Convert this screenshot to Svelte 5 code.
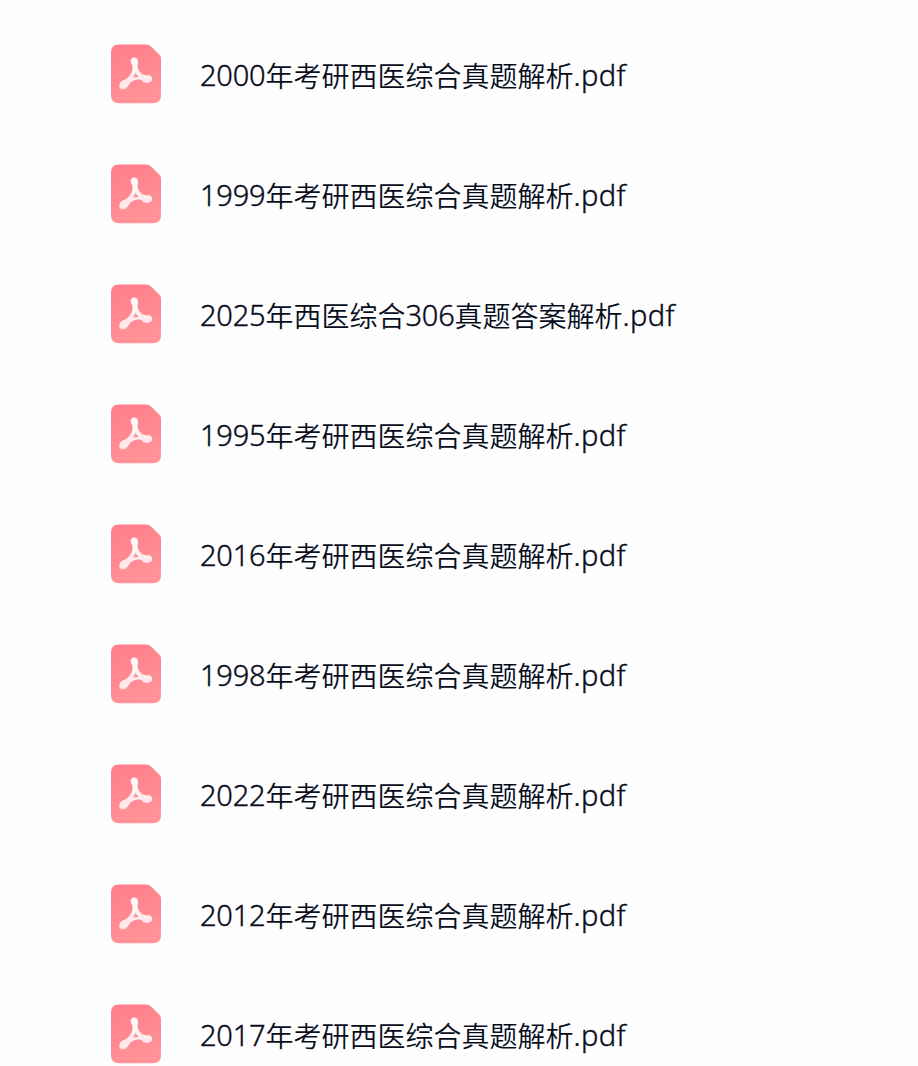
<script lang="ts">
  interface FileItem {
    year: string;
    title: string;
    code?: string;
    suffix?: string;
  }

  const files: FileItem[] = [
    { year: '2000', title: '年考研西医综合真题解析' },
    { year: '1999', title: '年考研西医综合真题解析' },
    { year: '2025', title: '年西医综合', code: '306', suffix: '真题答案解析' },
    { year: '1995', title: '年考研西医综合真题解析' },
    { year: '2016', title: '年考研西医综合真题解析' },
    { year: '1998', title: '年考研西医综合真题解析' },
    { year: '2022', title: '年考研西医综合真题解析' },
    { year: '2012', title: '年考研西医综合真题解析' },
    { year: '2017', title: '年考研西医综合真题解析' }
  ];
</script>

<ul class="file-list">
  {#each files as file}
    <li class="file-row">
      <svg class="file-icon" viewBox="0 0 52 60" aria-hidden="true">
        <defs>
          <linearGradient id="pdf-bg" x1="0" y1="0" x2="0.3" y2="1">
            <stop offset="0" stop-color="#ff7c88" />
            <stop offset="1" stop-color="#ff9398" />
          </linearGradient>
          <linearGradient id="pdf-mark" x1="0" y1="0" x2="0" y2="1">
            <stop offset="0" stop-color="#fffafa" />
            <stop offset="1" stop-color="#ffe3e4" />
          </linearGradient>
        </defs>
        <path
          d="M9 .5H36.5Q39 .5 41 2.4L49.2 10.5Q51 12.3 51 15V51.5Q51 59.3 43 59.3H9Q1 59.3 1 51.5V8.5Q1 .5 9 .5Z"
          fill="url(#pdf-bg)"
        />
        <path
          fill="url(#pdf-mark)"
          fill-rule="evenodd"
          d="M23.800 13.500C26.600 13.300 28.200 15.300 28.100 18.200C28 20.500 27.500 22 28 24C28.800 27 30.700 29.600 33.300 30.700C35.200 31.400 38 30.700 40.400 31.700C42.700 32.900 42.800 35.700 41.200 37.300C39.200 39.200 35.700 39.200 33.400 37.700C31.800 36.400 31 35.700 29.200 35.600C26.300 35.400 23.300 36.400 21.200 37.900C19.500 39.200 18.900 41 17.300 43C15.400 45.400 12.200 46 10.400 44.400C8.600 42.800 9.100 39.500 11.100 37.700C13.300 35.600 16 35.500 17.900 33.700C20.300 31.500 22 28 22.500 25C22.900 22.500 22.100 21.400 21.300 19.200C20.200 16.100 21.200 13.700 23.800 13.500ZM25.600 28.900L23.200 33.700L28.300 32.700Z"
        />
      </svg>
      <span class="file-name">
        <span class="latin">{file.year}</span>{file.title}{#if file.code}<span class="latin">{file.code}</span>{file.suffix}{/if}<span class="latin ext">.pdf</span>
      </span>
    </li>
  {/each}
</ul>

<style>
  :global(body) {
    margin: 0;
    background: #fefefe;
    overflow: hidden;
  }

  .file-list {
    box-sizing: border-box;
    height: 1066px;
    margin: 0;
    padding: 14px 0 0 110px;
    overflow: hidden;
    list-style: none;
  }

  .file-row {
    display: flex;
    align-items: center;
    gap: 38px;
    height: 120px;
  }

  .file-icon {
    flex: none;
    width: 52px;
    height: 60px;
  }

  .file-name {
    padding-top: 2px;
    color: #080d1d;
    font-family: 'Noto Sans CJK SC', sans-serif;
    font-size: 28px;
    font-weight: 350;
    line-height: 40px;
    white-space: nowrap;
  }

  .latin {
    font-family: 'Noto Sans', 'Open Sans', sans-serif;
    font-size: 29px;
    font-weight: 350;
    line-height: 1;
    letter-spacing: -0.2px;
    vertical-align: 1px;
    -webkit-text-stroke: 0.4px #080d1d;
  }

  .ext {
    letter-spacing: 0.4px;
  }
</style>
